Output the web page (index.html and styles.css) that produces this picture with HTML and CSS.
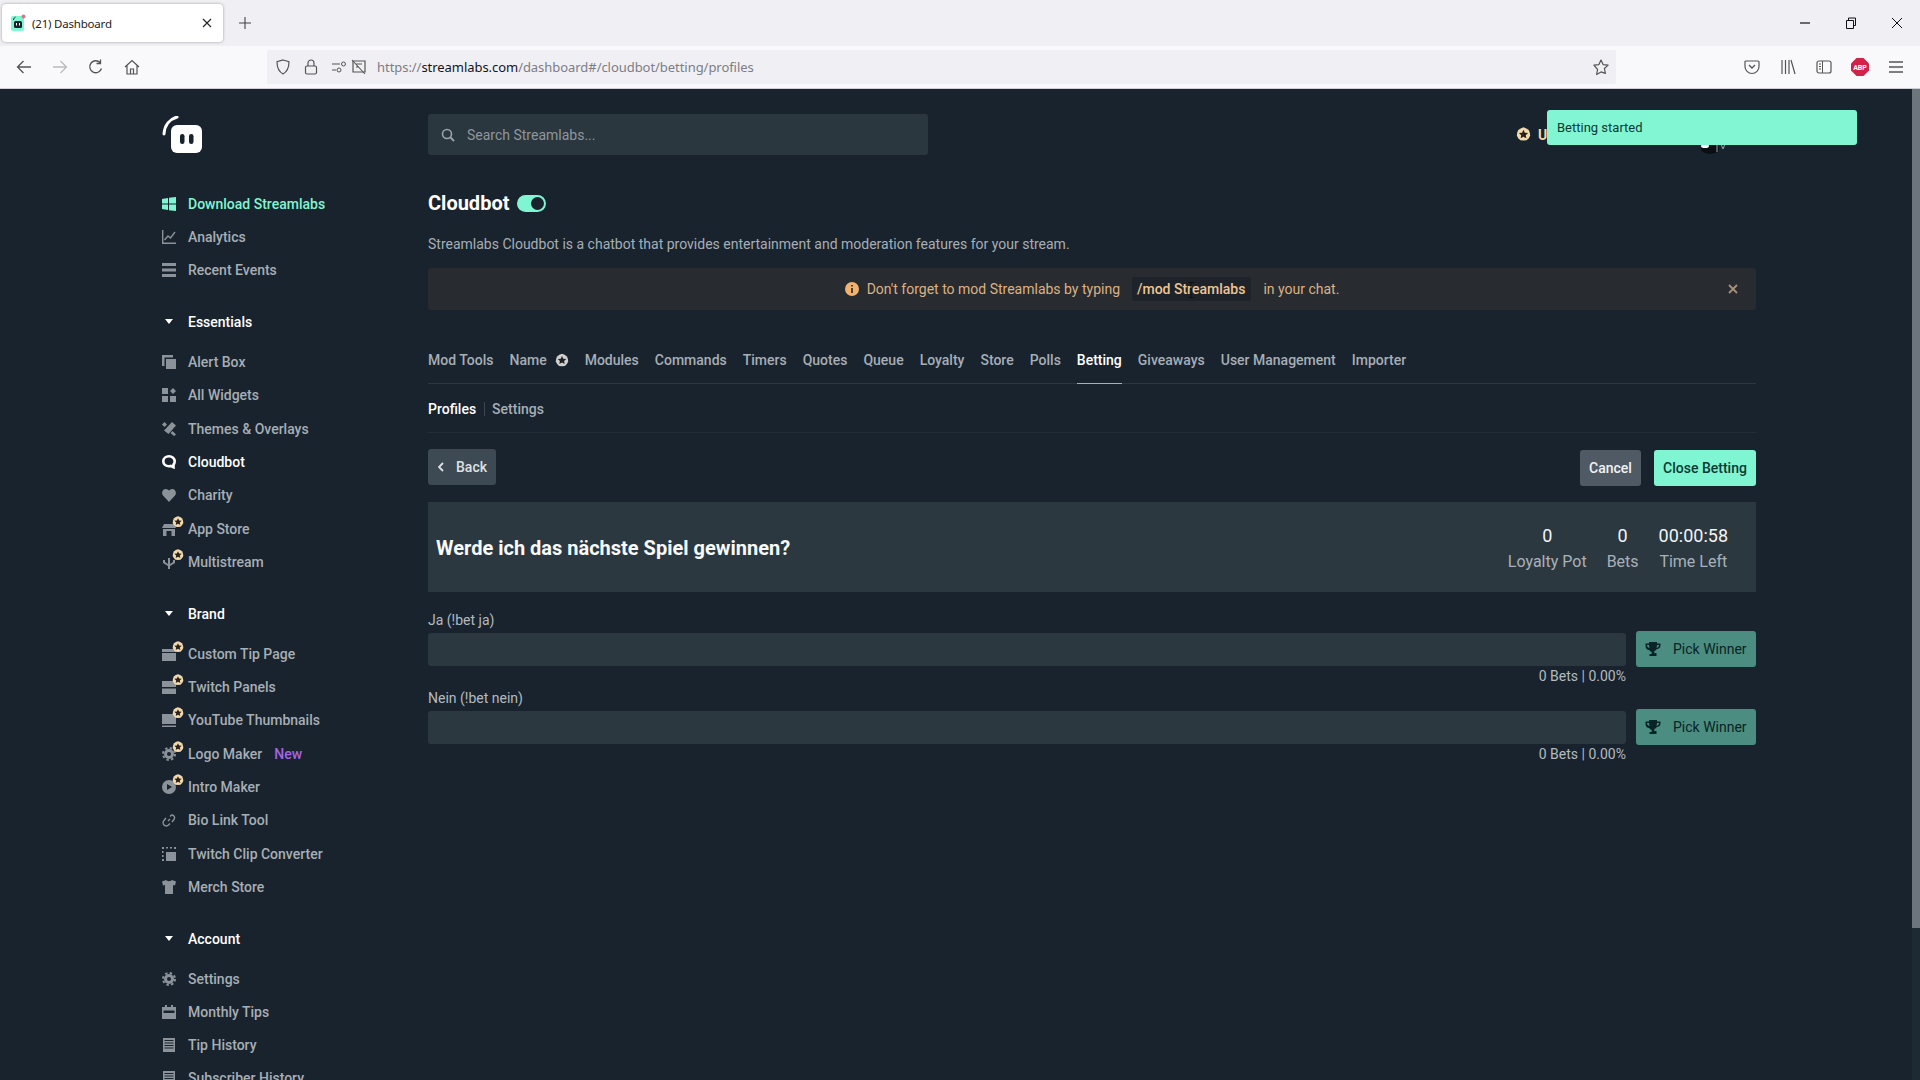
FILE: index.html
```html
<!DOCTYPE html>
<html lang="en">
<head>
<meta charset="utf-8">
<title>(21) Dashboard</title>
<link rel="stylesheet" href="styles.css">
</head>
<body>
<svg class="defs" width="0" height="0" aria-hidden="true">
  <symbol id="star-badge" viewBox="0 0 14 14"><path fill="#f3d9ae" d="M7 .3l2.6 1 2.3 1.6 1 2.5.3 2.7-1.3 2.4-2 1.9-2.9.3-2.9-.3-2-1.9L.8 8.100l.3-2.700 1-2.500 2.300-1.600z"/><path fill="#2a2119" d="M7 2.500l1.300 2.800 3 .3-2.200 2 .6 3L7 9.100l-2.700 1.500.6-3-2.200-2 3-.3z"/></symbol>
  <symbol id="gear" viewBox="0 0 14 14"><circle cx="7" cy="7" r="5" fill="currentColor"/><circle cx="7" cy="7" r="6" fill="none" stroke="currentColor" stroke-width="2" stroke-dasharray="2.400 2.312"/><circle cx="7" cy="7" r="2" fill="#19232d"/></symbol>
  <symbol id="list-doc" viewBox="0 0 14 14"><path fill="currentColor" d="M1 0h12v14H1zM2.500 2v1h9V2zm0 2.500v1h9v-1zm0 2.500v1h9V7zm0 2.500v1h9v-1z"/></symbol>
  <symbol id="pick" viewBox="0 0 16 16"><path fill="currentColor" d="M4 1h8v1.500h3.500v2c0 2-1.500 3.500-4 3.800-.6 1-1.300 1.500-2.200 1.700v2h2.200V15H4.500v-2h2.200v-2c-.9-.2-1.600-.7-2.200-1.700C2 9 .5 7.500.5 4.500v-2H4zM2 4c0 1.500.7 2.500 2.400 2.900L4 4zm12 0h-2l-.4 2.900C13.300 6.500 14 5.500 14 4z"/></symbol>
</svg>

<header class="tabstrip">
  <div class="tab">
    <svg class="favicon" viewBox="0 0 16 18"><rect x="1" y="2" width="13" height="15" rx="2" fill="#80f5d2"/><rect x="4" y="7" width="8" height="7" rx="1.500" fill="#17242d"/><rect x="6" y="9" width="1" height="2.500" fill="#fff"/><rect x="9" y="9" width="1" height="2.500" fill="#fff"/><path d="M3.500 6c0-1.500 1-2.500 2-3" stroke="#17242d" fill="none"/><circle cx="13.500" cy="2.500" r="2" fill="#e0708a"/></svg>
    <span class="tab-title">(21) Dashboard</span>
    <svg class="tab-close" viewBox="0 0 10 10"><path d="M1 1l8 8M9 1l-8 8" stroke="#222" stroke-width="1.100"/></svg>
  </div>
  <svg class="new-tab" viewBox="0 0 12 12"><path d="M6 0v12M0 6h12" stroke="#444" stroke-width="1.100"/></svg>
  <div class="win-controls">
    <span class="win-btn"><svg class="win-ic" viewBox="0 0 12 12"><path d="M1 6h10" stroke="#111" stroke-width="1.200"/></svg></span>
    <span class="win-btn"><svg class="win-ic" viewBox="0 0 12 12"><path d="M1.500 3.500h7v8h-7zM3.500 3.500V1h7v7.500H8.500" fill="none" stroke="#111"/></svg></span>
    <span class="win-btn"><svg class="win-ic" viewBox="0 0 12 12"><path d="M1 1l10 10M11 1L1 11" stroke="#111"/></svg></span>
  </div>
</header>

<nav class="toolbar">
  <span class="tb-btn"><svg class="tb-ic" viewBox="0 0 16 16"><path d="M15 8H1.500M7.500 2l-6 6 6 6" fill="none" stroke="#555" stroke-width="1.300"/></svg></span>
  <span class="tb-btn"><svg class="tb-ic" viewBox="0 0 16 16"><path d="M1 8h13.500M8.500 2l6 6-6 6" fill="none" stroke="#bbb" stroke-width="1.300"/></svg></span>
  <span class="tb-btn"><svg class="tb-ic" viewBox="0 0 16 16"><path d="M13.500 9.500A6 6 0 1 1 12 3.500M12.500 .5v4h-4" fill="none" stroke="#555" stroke-width="1.300"/></svg></span>
  <span class="tb-btn"><svg class="tb-ic" viewBox="0 0 16 16"><path d="M1 8l7-6.500L15 8M3 6.500V15h10V6.500M6.500 15v-5h3v5" fill="none" stroke="#555" stroke-width="1.200"/></svg></span>
  <div class="urlbar">
    <svg class="url-ic shield" viewBox="0 0 16 16"><path d="M8 1l6 1.800c0 6-1.500 9.700-6 12.200-4.500-2.500-6-6.200-6-12.200z" fill="none" stroke="#555" stroke-width="1.200"/></svg>
    <svg class="url-ic lock" viewBox="0 0 16 16"><rect x="2.500" y="7" width="11" height="8" rx="1.500" fill="none" stroke="#555" stroke-width="1.200"/><path d="M5 7V4a3 3 0 0 1 6 0v3" fill="none" stroke="#555" stroke-width="1.200"/></svg>
    <svg class="url-ic perm" viewBox="0 0 16 16"><path d="M1 5h8M1 11h4" stroke="#555" stroke-width="1.200"/><circle cx="12.500" cy="5" r="2" fill="none" stroke="#555"/><circle cx="8" cy="11" r="2" fill="none" stroke="#555"/></svg>
    <svg class="url-ic noauto" viewBox="0 0 16 16"><path d="M2 2h12v11H2z" fill="none" stroke="#555" stroke-width="1.200"/><path d="M1 1l13 14M5 5h6M5 8h3" stroke="#555" stroke-width="1.100"/></svg>
    <span class="url"><span class="url-dim">https://</span>streamlabs.com<span class="url-dim">/dashboard#/cloudbot/betting/profiles</span></span>
    <svg class="url-ic star" viewBox="0 0 16 16"><path d="M8 1l2.100 4.600 5 .5-3.700 3.400 1 4.900L8 12.900l-4.400 2.500 1-4.900L.9 6.100l5-.5z" fill="none" stroke="#555" stroke-width="1.200" stroke-linejoin="round"/></svg>
  </div>
  <span class="tb-btn first-right"><svg class="tb-ic" viewBox="0 0 16 16"><path d="M2 2h12a1 1 0 0 1 1 1v4.500A7 7 0 0 1 1 7.500V3a1 1 0 0 1 1-1z" fill="none" stroke="#555" stroke-width="1.200"/><path d="M5 6l3 3 3-3" fill="none" stroke="#555" stroke-width="1.400"/></svg></span>
  <span class="tb-btn"><svg class="tb-ic" viewBox="0 0 16 16"><path d="M2 1v14M5.500 1v14M9 1v14M11 1l4 14" fill="none" stroke="#555" stroke-width="1.200"/></svg></span>
  <span class="tb-btn"><svg class="tb-ic" viewBox="0 0 16 16"><rect x="1" y="2" width="14" height="12" rx="2" fill="none" stroke="#555" stroke-width="1.200"/><path d="M6.500 2v12M3 5h2M3 7.500h2M3 10h2" stroke="#555"/></svg></span>
  <span class="tb-btn"><svg class="abp" viewBox="0 0 18 18"><path d="M5.500 0h7L18 5.500v7L12.500 18h-7L0 12.500v-7z" fill="#d2224a"/><text x="9" y="11.800" text-anchor="middle" class="abp-text">ABP</text></svg></span>
  <span class="tb-btn"><svg class="tb-ic" viewBox="0 0 16 16"><path d="M1 3h14M1 8h14M1 13h14" stroke="#555" stroke-width="1.400"/></svg></span>
</nav>

<div class="page">
  <aside class="sidebar">
    <svg class="logo" viewBox="0 0 40 37"><path d="M2 18C2.500 9 8 3 15 1" fill="none" stroke="#fff" stroke-width="3" stroke-linecap="round"/><rect x="9" y="9" width="31" height="28" rx="6" fill="#fff"/><rect x="18" y="18" width="4.500" height="10" rx="2.200" fill="#19232d"/><rect x="27" y="18" width="4.500" height="10" rx="2.200" fill="#19232d"/></svg>

    <a class="item item-dl"><svg class="ic" viewBox="0 0 14 14"><path fill="currentColor" d="M0 2l6-1v5.500H0zM7 .8L14 0v6.500H7zM0 7.500h6V13l-6-1zM7 7.500h7V14l-7-.8z"/></svg>Download Streamlabs</a>
    <a class="item"><svg class="ic" viewBox="0 0 14 14"><path d="M.7 0v13.300H14M2.500 10l3.500-4 2.500 2L13 2" fill="none" stroke="currentColor" stroke-width="1.400"/></svg>Analytics</a>
    <a class="item"><svg class="ic" viewBox="0 0 14 14"><path fill="currentColor" d="M0 0h14v3H0zM0 5.500h14v3H0zM0 11h14v3H0z"/></svg>Recent Events</a>

    <div class="head"><span class="caret"></span>Essentials</div>
    <a class="item"><svg class="ic" viewBox="0 0 14 14"><path fill="currentColor" d="M0 0h11v2.500H2.500V11H0zM4 4h10v10H4z"/></svg>Alert Box</a>
    <a class="item"><svg class="ic" viewBox="0 0 14 14"><path fill="currentColor" d="M0 0h6v6H0zM11 0l3 3-3 3-3-3zM0 8h6v6H0zM8 8h6v6H8z"/></svg>All Widgets</a>
    <a class="item"><svg class="ic" viewBox="0 0 14 14"><path fill="currentColor" d="M0 2.500L2.500 0 5 2.500 2.500 5zM10 0l4 3.500L6.500 12 2 8.500zM10.500 9l3.500 3.500L12 14l-3.500-3z"/></svg>Themes &amp; Overlays</a>
    <a class="item item-on"><svg class="ic" viewBox="0 0 14 14"><path fill="none" stroke="currentColor" stroke-width="2.600" d="M7 1.300C3.800 1.300 1.300 3.500 1.300 6.300s2.500 5 5.700 5c.7 0 1.400 0 2-.3l2.500 1.200V9.500c1-.8 1.200-2 1.200-3.200 0-2.800-2.500-5-5.700-5z"/></svg>Cloudbot</a>
    <a class="item"><svg class="ic" viewBox="0 0 14 14"><path fill="currentColor" d="M7 14L1 7.500C-1 5 .5 1 3.800 1 5.200 1 6.300 1.700 7 2.800 7.700 1.700 8.800 1 10.200 1c3.300 0 4.800 4 2.800 6.500z"/></svg>Charity</a>
    <a class="item"><span class="ic-wrap"><svg class="ic" viewBox="0 0 14 14"><path fill="currentColor" d="M2 2h10l2 4H0zM1 7h12v7H1zM4.500 9v5h5V9z"/></svg><svg class="badge"><use href="#star-badge"/></svg></span>App Store</a>
    <a class="item"><span class="ic-wrap"><svg class="ic" viewBox="0 0 14 14"><path fill="currentColor" d="M6 3h2v6l3-2V5h2v3l-5 3v3H6v-3L1 8V5h2v2l3 2z"/></svg><svg class="badge"><use href="#star-badge"/></svg></span>Multistream</a>

    <div class="head"><span class="caret"></span>Brand</div>
    <a class="item"><span class="ic-wrap"><svg class="ic" viewBox="0 0 14 14"><path fill="currentColor" d="M0 2h14v3H0zM0 6h14v8H0z"/></svg><svg class="badge"><use href="#star-badge"/></svg></span>Custom Tip Page</a>
    <a class="item"><span class="ic-wrap"><svg class="ic" viewBox="0 0 14 14"><path fill="currentColor" d="M0 1h14v6H0zM0 8.500h14V14H0z"/></svg><svg class="badge"><use href="#star-badge"/></svg></span>Twitch Panels</a>
    <a class="item"><span class="ic-wrap"><svg class="ic" viewBox="0 0 14 14"><path fill="currentColor" d="M0 1h14v10H0zM0 12.500h14V14H0z"/></svg><svg class="badge"><use href="#star-badge"/></svg></span>YouTube Thumbnails</a>
    <a class="item"><span class="ic-wrap"><svg class="ic"><use href="#gear"/></svg><svg class="badge"><use href="#star-badge"/></svg></span>Logo Maker<span class="new">New</span></a>
    <a class="item"><span class="ic-wrap"><svg class="ic" viewBox="0 0 14 14"><path fill="currentColor" fill-rule="evenodd" d="M7 0a7 7 0 1 1 0 14A7 7 0 0 1 7 0zM5 4v6l5-3z"/></svg><svg class="badge"><use href="#star-badge"/></svg></span>Intro Maker</a>
    <a class="item"><svg class="ic" viewBox="0 0 14 14"><path d="M6 8l2-2M8 3.500l1.500-1.500a2.800 2.800 0 0 1 2.500 4.500L10 9M4 5L2 7.500A2.800 2.800 0 0 0 6.500 12L8 10.500" fill="none" stroke="currentColor" stroke-width="1.400"/></svg>Bio Link Tool</a>
    <a class="item"><svg class="ic" viewBox="0 0 14 14"><path fill="currentColor" d="M0 0h2v2H0zM4 0h2v1.500H4zM8 0h2v1.500H8zM12 0h2v2h-2zM0 4h1.500v2H0zM0 8h1.500v2H0zM0 12h2v2H0zM4 5h10v9H4z"/></svg>Twitch Clip Converter</a>
    <a class="item"><svg class="ic" viewBox="0 0 14 14"><path fill="currentColor" d="M4 0C5 1.500 9 1.500 10 0l4 1.500-1 4-2-.5V14H3V5l-2 .5-1-4z"/></svg>Merch Store</a>

    <div class="head"><span class="caret"></span>Account</div>
    <a class="item"><svg class="ic"><use href="#gear"/></svg>Settings</a>
    <a class="item"><svg class="ic" viewBox="0 0 14 14"><path fill="currentColor" d="M3 0h2v2h4V0h2v2h3v12H0V2h3zM1.500 5.500V8h11V5.500z"/></svg>Monthly Tips</a>
    <a class="item"><svg class="ic"><use href="#list-doc"/></svg>Tip History</a>
    <a class="item"><svg class="ic"><use href="#list-doc"/></svg>Subscriber History</a>
  </aside>

  <main class="main">
    <div class="topbar">
      <div class="search">
        <svg class="search-ic" viewBox="0 0 14 14"><circle cx="6" cy="6" r="4.500" fill="none" stroke="currentColor" stroke-width="1.600"/><path d="M9.500 9.500L13 13" stroke="currentColor" stroke-width="1.800"/></svg>
        <span>Search Streamlabs...</span>
      </div>
      <div class="ultra"><svg class="ultra-ic"><use href="#star-badge"/></svg>Ultra</div>
      <svg class="avatar-bit" viewBox="0 0 24 10"><ellipse cx="9" cy="5" rx="9" ry="5" fill="#0b0f13"/><ellipse cx="4" cy="2" rx="4" ry="2" fill="#fff"/><path d="M16 0v8M20 0l2 5 2-5" stroke="#9aa2a8" fill="none"/></svg>
    </div>

    <div class="title-row">
      <h1 class="title">Cloudbot</h1>
      <span class="toggle"><span class="knob"></span></span>
    </div>
    <p class="desc">Streamlabs Cloudbot is a chatbot that provides entertainment and moderation features for your stream.</p>

    <div class="alert">
      <svg class="alert-ic" viewBox="0 0 14 14"><circle cx="7" cy="7" r="7" fill="#f0b26c"/><path d="M6.200 3h1.600v1.600H6.200zM6.200 6h1.600v5H6.200z" fill="#2a2420"/></svg>
      <span>Don't forget to mod Streamlabs by typing</span>
      <code class="code">/mod Streamlabs</code>
      <span>in your chat.</span>
      <svg class="alert-x" viewBox="0 0 10 10"><path d="M1 1l8 8M9 1l-8 8" stroke="currentColor" stroke-width="1.800"/></svg>
      <svg class="ibeam" viewBox="0 0 8 16"><path d="M1 .5h6M4 .5v15M1 15.500h6" stroke="#111" fill="none"/></svg>
    </div>

    <div class="tabs">
      <span class="t">Mod Tools</span>
      <span class="t t-name">Name <svg class="name-ic"><use href="#star-badge"/></svg></span>
      <span class="t">Modules</span>
      <span class="t">Commands</span>
      <span class="t">Timers</span>
      <span class="t">Quotes</span>
      <span class="t">Queue</span>
      <span class="t">Loyalty</span>
      <span class="t">Store</span>
      <span class="t">Polls</span>
      <span class="t t-on">Betting</span>
      <span class="t">Giveaways</span>
      <span class="t">User Management</span>
      <span class="t">Importer</span>
    </div>

    <div class="subtabs">
      <span class="st st-on">Profiles</span>
      <span class="st">Settings</span>
    </div>

    <div class="actions">
      <button class="btn btn-back"><svg class="chev" viewBox="0 0 6 10"><path d="M5 1L1 5l4 4" fill="none" stroke="currentColor" stroke-width="1.800"/></svg>Back</button>
      <div class="actions-r">
        <button class="btn btn-cancel">Cancel</button>
        <button class="btn btn-close">Close Betting</button>
      </div>
    </div>

    <section class="bet-card">
      <h2 class="bet-q">Werde ich das nächste Spiel gewinnen?</h2>
      <div class="stats">
        <div class="stat"><b>0</b><span>Loyalty Pot</span></div>
        <div class="stat"><b>0</b><span>Bets</span></div>
        <div class="stat"><b>00:00:58</b><span>Time Left</span></div>
      </div>
    </section>

    <div class="opt">
      <div class="opt-label">Ja (!bet ja)</div>
      <div class="opt-row">
        <div class="opt-bar"></div>
        <button class="btn btn-pick"><svg class="pick-ic"><use href="#pick"/></svg>Pick Winner</button>
      </div>
      <div class="opt-meta">0 Bets | 0.00%</div>
    </div>
    <div class="opt">
      <div class="opt-label">Nein (!bet nein)</div>
      <div class="opt-row">
        <div class="opt-bar"></div>
        <button class="btn btn-pick"><svg class="pick-ic"><use href="#pick"/></svg>Pick Winner</button>
      </div>
      <div class="opt-meta">0 Bets | 0.00%</div>
    </div>
  </main>

  <div class="scroll"><div class="thumb"></div></div>
  <div class="toast">Betting started</div>
</div>
</body>
</html>
```
FILE: styles.css
```css
* { box-sizing: border-box; }
html, body { margin: 0; height: 100%; }
body {
  height: 1080px;
  overflow: hidden;
  display: flex;
  flex-direction: column;
  font-family: Roboto, "Liberation Sans", sans-serif;
  background: #19232d;
}
.defs { position: absolute; }

/* Browser chrome */
.tabstrip {
  height: 46px;
  flex: none;
  display: flex;
  align-items: center;
  background: #f0f0f4;
}
.tab {
  width: 221px;
  height: 38px;
  margin-left: 2px;
  display: flex;
  align-items: center;
  padding-left: 8px;
  background: #fff;
  border-radius: 4px;
  box-shadow: 0 0 3px rgba(0,0,0,.35);
}
.favicon { width: 16px; height: 18px; flex: none; }
.tab-title {
  margin-left: 6px;
  font: 11.5px "Noto Sans", sans-serif;
  color: #222;
  letter-spacing: -.2px;
}
.tab-close { width: 10px; height: 10px; margin-left: auto; margin-right: 11px; }
.new-tab { width: 12px; height: 12px; margin-left: 16px; }
.win-controls { margin-left: auto; display: flex; }
.win-btn { width: 46px; display: flex; justify-content: center; }
.win-ic { width: 12px; height: 12px; }

.toolbar {
  height: 42.5px;
  flex: none;
  display: flex;
  align-items: center;
  padding-left: 6px;
  background: #f9f9fb;
  border-bottom: 1px solid #cfcfd8;
}
.tb-btn { width: 36px; display: flex; justify-content: center; flex: none; }
.tb-ic { width: 16px; height: 16px; }
.abp { width: 18px; height: 18px; }
.abp-text { font: 700 7px Roboto, sans-serif; fill: #fff; }
.first-right { margin-left: 118px; }
.urlbar {
  width: 1349px;
  height: 34px;
  margin-left: 117px;
  flex: none;
  display: flex;
  align-items: center;
  padding: 0 7px 0 8px;
  background: #f0f0f4;
  border-radius: 2px;
}
.url-ic { width: 16px; height: 16px; flex: none; }
.lock { margin-left: 12px; }
.perm { margin-left: 12px; }
.noauto { margin-left: 4px; }
.star { margin-left: auto; }
.url {
  margin-left: 10px;
  font: 13px "Noto Sans", sans-serif;
  color: #15141a;
  letter-spacing: -.05px;
}
.url-dim { color: #7d7d86; }

/* Page */
.page {
  position: relative;
  flex: 1;
  min-height: 0;
  display: flex;
  overflow: hidden;
  background: #19232d;
}
.sidebar {
  width: 428px;
  flex: none;
  height: 100%;
  overflow: hidden;
  padding: 27.500px 0 0 162px;
}
.logo { display: block; width: 40px; height: 37px; margin-bottom: 34px; }
.item {
  height: 33.33px;
  display: flex;
  align-items: center;
  gap: 12px;
  font-size: 14px;
  font-weight: 500;
  color: #a6aeb6;
}
.item-dl { color: #80f5d2; }
.item-on { color: #fff; }
.ic { width: 14px; height: 14px; flex: none; color: #8b9299; }
.item-dl .ic, .item-on .ic { color: inherit; }
.ic-wrap { position: relative; width: 14px; height: 14px; flex: none; }
.ic-wrap .ic { display: block; }
.badge { position: absolute; left: 10px; top: -6px; width: 12px; height: 12px; }
.new { margin-left: 0; color: #a366e6; }
.head {
  height: 33.33px;
  margin: 18.33px 0 6.67px;
  display: flex;
  align-items: center;
  font-size: 14px;
  font-weight: 500;
  color: #fff;
}
.caret {
  width: 0;
  height: 0;
  margin: 0 15px 0 3px;
  border: 4px solid transparent;
  border-top: 5px solid #fff;
  border-bottom: 0;
}

.main { width: 1328px; flex: none; }
.topbar { height: 66.500px; padding-top: 25.500px; display: flex; align-items: flex-start; }
.search {
  width: 500px;
  height: 41px;
  display: flex;
  align-items: center;
  gap: 12px;
  padding-left: 13px;
  background: #2b373f;
  border-radius: 3px;
  font-size: 14px;
  color: #8e969d;
}
.search-ic { width: 14px; height: 14px; color: #9ba3aa; }
.ultra {
  margin-left: 588px;
  height: 41px;
  display: flex;
  align-items: center;
  gap: 7px;
  font-size: 14px;
  font-weight: 700;
  color: #f3d9ae;
}
.ultra-ic { width: 15px; height: 15px; }
.avatar-bit { width: 24px; height: 10px; margin: 30px 0 0 133px; }

.title-row { height: 24px; margin-top: 36px; display: flex; align-items: center; gap: 8px; }
.title { margin: 0; font-size: 20px; font-weight: 700; line-height: 24px; color: #fff; }
.toggle {
  width: 29px;
  height: 17px;
  display: flex;
  align-items: center;
  justify-content: flex-end;
  padding-right: 2px;
  background: #80f5d2;
  border-radius: 9px;
}
.knob { width: 13px; height: 13px; border-radius: 50%; background: #19232d; }
.desc { margin: 19px 0 0; font-size: 14px; line-height: 20px; color: #a6aeb6; }

.alert {
  position: relative;
  height: 42px;
  margin-top: 14px;
  display: flex;
  align-items: center;
  justify-content: center;
  background: #282b30;
  border-radius: 3px;
  font-size: 14px;
  color: #dcb283;
}
.alert-ic { width: 14px; height: 14px; margin-right: 8px; }
.code {
  margin: 0 12px;
  padding: 3px 6px 3px 5px;
  font: 500 14px/18px Roboto, sans-serif;
  color: #edc594;
  background: #1e232a;
  border-radius: 3px;
}
.alert-x { position: absolute; right: 18px; top: 16px; width: 10px; height: 10px; color: #a8917a; }
.ibeam { position: absolute; left: 759px; top: 14px; width: 8px; height: 16px; }

.tabs {
  margin-top: 36px;
  display: flex;
  gap: 16px;
  border-bottom: 1px solid #2b373f;
}
.t {
  padding: 4px 0 13px;
  font-size: 14px;
  font-weight: 500;
  line-height: 20px;
  color: #a6aeb6;
  white-space: nowrap;
}
.t-name { display: flex; gap: 8px; }
.name-ic { width: 14px; height: 15px; margin-top: 3px; filter: grayscale(1) brightness(.95); }
.t-on { color: #fff; box-shadow: 0 1px 0 #a6aeb6; }

.subtabs {
  padding: 15px 0 13px;
  display: flex;
  border-bottom: 1px solid #222e37;
}
.st { font-size: 14px; font-weight: 500; line-height: 20px; color: #a6aeb6; }
.st-on { color: #fff; padding-right: 8px; margin-right: 7px; border-right: 1px solid #3a4650; line-height: 14px; margin-top: 3px; height: 14px; }

.actions { margin-top: 16px; display: flex; justify-content: space-between; }
.actions-r { display: flex; gap: 13px; margin-top: 1px; }
.btn {
  height: 36px;
  display: flex;
  align-items: center;
  border: 0;
  border-radius: 3px;
  font-family: Roboto, sans-serif;
  font-size: 14px;
  font-weight: 500;
}
.btn-back { width: 68px; gap: 12px; padding: 0 0 0 10px; background: #3e4a53; color: #dde1e4; }
.chev { width: 6px; height: 10px; flex: none; }
.btn-cancel { width: 61px; justify-content: center; padding: 0; background: #4f5a64; color: #f0f2f3; }
.btn-close { width: 102px; justify-content: center; padding: 0; background: #80f5d2; color: #0a3a33; }

.bet-card {
  height: 90px;
  margin-top: 16px;
  display: flex;
  align-items: center;
  justify-content: space-between;
  padding: 0 28px 0 8px;
  background: #2c3840;
}
.bet-q { margin: 0; padding-top: 2px; font-size: 20px; font-weight: 700; color: #f7f9fa; }
.stats { display: flex; gap: 20px; }
.stat { display: flex; flex-direction: column; align-items: center; padding-top: 3px; }
.stat b { font-size: 18px; font-weight: 400; line-height: 26px; color: #f2f4f5; }
.stat span { font-size: 16px; line-height: 26px; color: #a9b1b8; }

.opt-label { margin-top: 18px; font-size: 14px; line-height: 20px; color: #b3bac0; }
.opt + .opt .opt-label { margin-top: 2px; }
.opt-row { margin-top: 1px; display: flex; align-items: center; gap: 10px; }
.opt-bar { flex: 1; height: 33px; background: #2c3840; border-radius: 3px; }
.btn-pick { width: 120px; gap: 12px; padding: 0 0 0 9px; background: #4b8d80; color: #082426; font-weight: 400; }
.pick-ic { width: 16px; height: 16px; flex: none; }
.opt-meta { margin: -1px 130px 0 0; text-align: right; font-size: 14px; line-height: 20px; color: #b3bac0; }

.scroll { margin-left: auto; width: 8px; height: 100%; background: #1e2a33; }
.thumb { height: 839px; background: #6c757c; }

.toast {
  position: absolute;
  left: 1547px;
  top: 21px;
  width: 310px;
  height: 35px;
  display: flex;
  align-items: center;
  padding-left: 10px;
  background: #82f5d3;
  border-radius: 3px;
  font-size: 13px;
  color: #0a3a33;
}
```
